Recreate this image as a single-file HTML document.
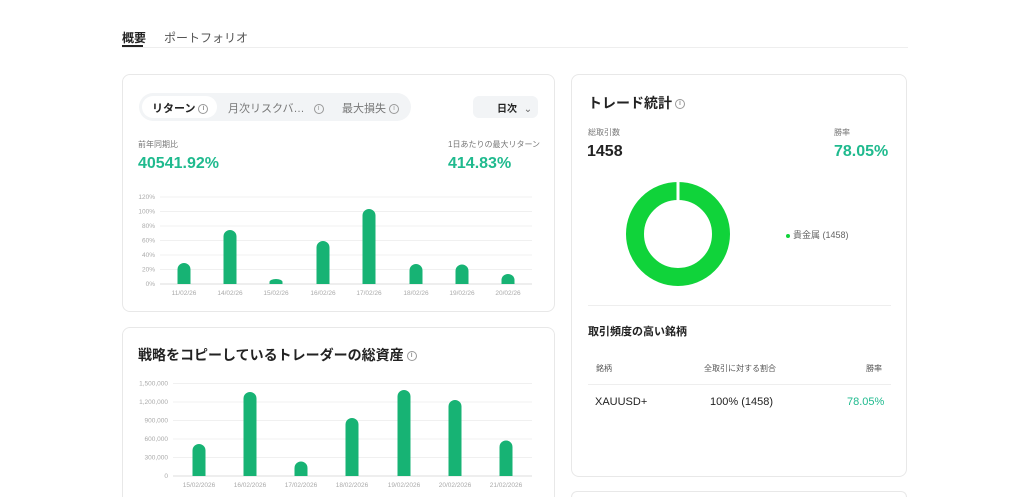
<!DOCTYPE html><html><head><meta charset="utf-8"><style>
*{margin:0;padding:0;box-sizing:border-box}
html{width:1024px;height:497px;overflow:hidden}
body{width:1024px;height:497px;overflow:hidden;background:#fff;font-family:"Liberation Sans","Noto Sans CJK JP",sans-serif;color:#222;position:relative}
.a{position:absolute;white-space:nowrap}
.card{position:absolute;border:1px solid #e8e8e8;border-radius:8px;background:#fff}
.g{color:#1fba8e}
.i{display:inline-block;width:10px;height:10px;border:1px solid #999;border-radius:50%;font-size:7px;line-height:8px;text-align:center;color:#999;vertical-align:middle;margin-left:3px}
</style></head><body>
<div class="a" style="left:122px;top:29px;font-size:12px;font-weight:bold">概要</div>
<div class="a" style="left:122px;top:45px;width:21px;height:2px;background:#222"></div>
<div class="a" style="left:164px;top:29px;font-size:12px;color:#555">ポートフォリオ</div>
<div class="a" style="left:122px;top:47px;width:786px;height:1px;background:#eee"></div>

<div class="card" style="left:122px;top:74px;width:433px;height:238px"></div>
<div class="a" style="left:139px;top:93px;width:272px;height:28px;border-radius:14px;background:#f2f4f6"></div>
<div class="a" style="left:142px;top:96px;width:75px;height:22px;border-radius:11px;background:#fff"></div>
<div class="a" style="left:152px;top:100px;font-size:11px;font-weight:bold">リターン<span class="i">i</span></div>
<div class="a" style="left:228px;top:100px;font-size:11px;color:#777">月次リスクバ… <span class="i" style="margin-left:6px">i</span></div>
<div class="a" style="left:342px;top:100px;font-size:11px;color:#777">最大損失<span class="i">i</span></div>
<div class="a" style="left:473px;top:96px;width:65px;height:22px;border-radius:6px;background:#f2f4f6"></div>
<div class="a" style="left:497px;top:100px;font-size:10px;font-weight:bold">日次 <span style="color:#666;font-weight:normal;margin-left:4px">⌄</span></div>
<div class="a" style="left:138px;top:139px;font-size:8px;color:#777">前年同期比</div>
<div class="a g" style="left:138px;top:155px;font-size:16px;font-weight:bold">40541.92%</div>
<div class="a" style="left:448px;top:139px;font-size:8px;color:#777">1日あたりの最大リターン</div>
<div class="a g" style="left:448px;top:155px;font-size:16px;font-weight:bold">414.83%</div>

<svg class="a" style="left:0;top:0" width="1024" height="497">
<g font-family="Liberation Sans" font-size="6.5" fill="#aaa">
<g stroke="#f0f0f0"><line x1="160" x2="532" y1="197" y2="197"/><line x1="160" x2="532" y1="211.5" y2="211.5"/><line x1="160" x2="532" y1="226" y2="226"/><line x1="160" x2="532" y1="240.5" y2="240.5"/><line x1="160" x2="532" y1="255" y2="255"/><line x1="160" x2="532" y1="269.5" y2="269.5"/></g>
<line x1="160" x2="532" y1="284" y2="284" stroke="#ddd"/>
<text x="155" y="199" text-anchor="end">120%</text><text x="155" y="213.5" text-anchor="end">100%</text><text x="155" y="228" text-anchor="end">80%</text><text x="155" y="242.5" text-anchor="end">60%</text><text x="155" y="257" text-anchor="end">40%</text><text x="155" y="271.5" text-anchor="end">20%</text><text x="155" y="286" text-anchor="end">0%</text>
<g text-anchor="middle"><text x="184" y="295">11/02/26</text><text x="230" y="295">14/02/26</text><text x="276" y="295">15/02/26</text><text x="323" y="295">16/02/26</text><text x="369" y="295">17/02/26</text><text x="416" y="295">18/02/26</text><text x="462" y="295">19/02/26</text><text x="508" y="295">20/02/26</text></g>
<g fill="#17b374">
<path d="M177.5 284V269.5a6.5 6.5 0 0 1 13 0V284z"/>
<path d="M223.5 284V236.5a6.5 6.5 0 0 1 13 0V284z"/>
<path d="M269.5 284V282a6.5 3 0 0 1 13 0V284z"/>
<path d="M316.5 284V247.5a6.5 6.5 0 0 1 13 0V284z"/>
<path d="M362.5 284V215.5a6.5 6.5 0 0 1 13 0V284z"/>
<path d="M409.5 284V270.5a6.5 6.5 0 0 1 13 0V284z"/>
<path d="M455.5 284V271a6.5 6.5 0 0 1 13 0V284z"/>
<path d="M501.5 284V280a6.5 6 0 0 1 13 0V284z"/>
</g>
</g>
</svg>

<div class="card" style="left:122px;top:327px;width:433px;height:170px;border-bottom:none;border-radius:8px 8px 0 0"></div>
<div class="a" style="left:138px;top:345px;font-size:14px;font-weight:bold">戦略をコピーしているトレーダーの総資産<span class="i">i</span></div>
<svg class="a" style="left:0;top:0" width="1024" height="497">
<g font-family="Liberation Sans" font-size="6.5" fill="#aaa">
<g stroke="#f0f0f0"><line x1="173" x2="532" y1="383.5" y2="383.5"/><line x1="173" x2="532" y1="402" y2="402"/><line x1="173" x2="532" y1="420.5" y2="420.5"/><line x1="173" x2="532" y1="439" y2="439"/><line x1="173" x2="532" y1="457.5" y2="457.5"/></g>
<line x1="173" x2="532" y1="476" y2="476" stroke="#ddd"/>
<text x="168" y="385.5" text-anchor="end">1,500,000</text><text x="168" y="404" text-anchor="end">1,200,000</text><text x="168" y="422.5" text-anchor="end">900,000</text><text x="168" y="441" text-anchor="end">600,000</text><text x="168" y="459.5" text-anchor="end">300,000</text><text x="168" y="478" text-anchor="end">0</text>
<g text-anchor="middle"><text x="199" y="487">15/02/2026</text><text x="250" y="487">16/02/2026</text><text x="301" y="487">17/02/2026</text><text x="352" y="487">18/02/2026</text><text x="404" y="487">19/02/2026</text><text x="455" y="487">20/02/2026</text><text x="506" y="487">21/02/2026</text></g>
<g fill="#17b374">
<path d="M192.5 476V450.5a6.5 6.5 0 0 1 13 0V476z"/>
<path d="M243.5 476V398.5a6.5 6.5 0 0 1 13 0V476z"/>
<path d="M294.5 476V468a6.5 6.5 0 0 1 13 0V476z"/>
<path d="M345.5 476V424.5a6.5 6.5 0 0 1 13 0V476z"/>
<path d="M397.5 476V396.5a6.5 6.5 0 0 1 13 0V476z"/>
<path d="M448.5 476V406.5a6.5 6.5 0 0 1 13 0V476z"/>
<path d="M499.5 476V447a6.5 6.5 0 0 1 13 0V476z"/>
</g>
</g>
</svg>

<div class="card" style="left:571px;top:74px;width:336px;height:403px"></div>
<div class="card" style="left:571px;top:491px;width:336px;height:6px;border-bottom:none;border-radius:8px 8px 0 0"></div>
<div class="a" style="left:588px;top:93px;font-size:14px;font-weight:bold">トレード統計<span class="i">i</span></div>
<div class="a" style="left:588px;top:127px;font-size:8px;color:#777">総取引数</div>
<div class="a" style="left:587px;top:143px;font-size:16px;font-weight:bold">1458</div>
<div class="a" style="left:834px;top:127px;font-size:8px;color:#777">勝率</div>
<div class="a g" style="left:834px;top:143px;font-size:16px;font-weight:bold">78.05%</div>
<svg class="a" style="left:620px;top:176px" width="120" height="120"><circle cx="58" cy="58" r="43" fill="none" stroke="#10d33a" stroke-width="18"/><rect x="56.5" y="4" width="3" height="22" fill="#fff"/></svg>
<div class="a" style="left:786px;top:228px;font-size:9px;color:#666"><span style="display:inline-block;width:4px;height:4px;background:#10d33a;border-radius:50%;vertical-align:middle;margin-right:3px"></span>貴金属 (1458)</div>
<div class="a" style="left:588px;top:305px;width:303px;height:1px;background:#eee"></div>
<div class="a" style="left:588px;top:323px;font-size:11px;font-weight:bold">取引頻度の高い銘柄</div>
<div class="a" style="left:596px;top:363px;font-size:8px;color:#555">銘柄</div>
<div class="a" style="left:704px;top:363px;font-size:8px;color:#555">全取引に対する割合</div>
<div class="a" style="left:866px;top:363px;font-size:8px;color:#555">勝率</div>
<div class="a" style="left:588px;top:384px;width:303px;height:1px;background:#eee"></div>
<div class="a" style="left:595px;top:396px;font-size:11px">XAUUSD+</div>
<div class="a" style="left:710px;top:396px;font-size:11px">100% (1458)</div>
<div class="a g" style="left:847px;top:396px;font-size:11px">78.05%</div>
</body></html>
